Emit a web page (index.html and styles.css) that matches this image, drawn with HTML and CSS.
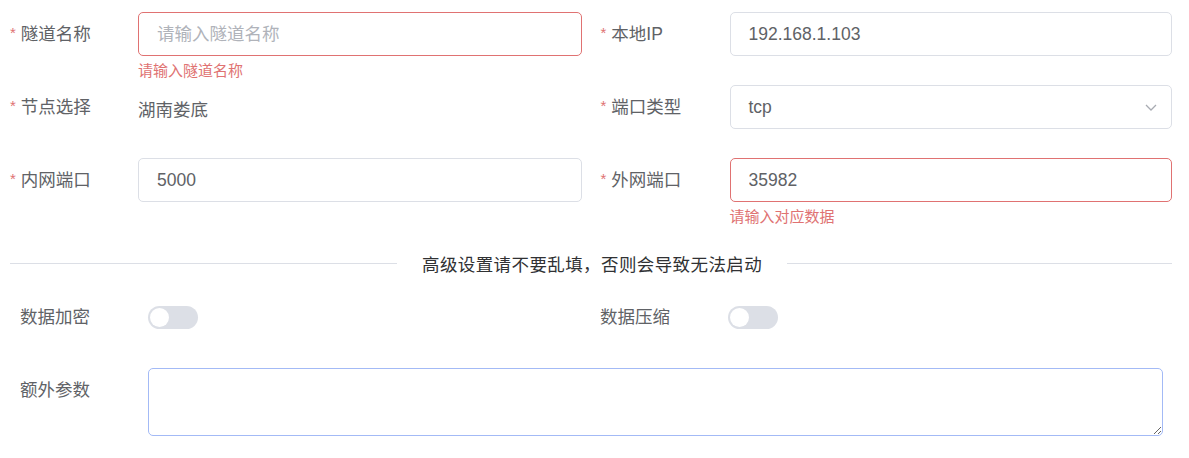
FILE: index.html
```html
<!DOCTYPE html>
<html lang="zh-CN">
<head>
    <meta charset="UTF-8">
    <title>隧道设置</title>
    <link rel="stylesheet" href="styles.css">
</head>
<body>
    <form class="tunnel-form">
        <div class="grid-top">
            <div class="item">
                <label class="label required">隧道名称</label>
                <div class="control">
                    <input class="input is-error" type="text" placeholder="请输入隧道名称">
                    <div class="error">请输入隧道名称</div>
                </div>
            </div>
            <div class="item">
                <label class="label required">本地IP</label>
                <div class="control">
                    <input class="input" type="text" value="192.168.1.103">
                </div>
            </div>

            <div class="item">
                <label class="label required">节点选择</label>
                <div class="control">
                    <span class="plain">湖南娄底</span>
                </div>
            </div>
            <div class="item">
                <label class="label required">端口类型</label>
                <div class="control">
                    <div class="select">
                        <span>tcp</span>
                        <svg width="12" height="7" viewBox="0 0 12 7"><polyline points="1,1 6,6 11,1" fill="none" stroke="#a8abb2" stroke-width="1.3"/></svg>
                    </div>
                </div>
            </div>

            <div class="item">
                <label class="label required">内网端口</label>
                <div class="control">
                    <input class="input" type="text" value="5000">
                </div>
            </div>
            <div class="item">
                <label class="label required">外网端口</label>
                <div class="control">
                    <input class="input is-error" type="text" value="35982">
                    <div class="error">请输入对应数据</div>
                </div>
            </div>
        </div>

        <div class="divider">
            <span>高级设置请不要乱填，否则会导致无法启动</span>
        </div>

        <div class="grid-bottom">
            <div class="item">
                <label class="label">数据加密</label>
                <div class="control">
                    <span class="switch"><span class="knob"></span></span>
                </div>
            </div>
            <div class="item">
                <label class="label">数据压缩</label>
                <div class="control">
                    <span class="switch"><span class="knob"></span></span>
                </div>
            </div>
            <div class="item wide">
                <label class="label">额外参数</label>
                <div class="control">
                    <textarea class="textarea"></textarea>
                </div>
            </div>
        </div>
    </form>
</body>
</html>
```

FILE: styles.css
```css
body {
    margin: 0;
    background: #fff;
    font-family: 'Liberation Sans', 'Noto Sans CJK SC', sans-serif;
    font-size: 17.5px;
    color: #606266;
}

.tunnel-form {
    padding-top: 12px;
}

.grid-top {
    display: grid;
    grid-template-columns: 1fr 1fr;
    column-gap: 19px;
    padding: 0 17px 0 10px;
}

.grid-bottom {
    display: grid;
    grid-template-columns: 561px 1fr;
    column-gap: 19px;
    padding: 0 26px 0 20px;
}

.item {
    display: flex;
    margin-bottom: 29px;
}

.item.wide {
    grid-column: 1 / 3;
}

.label {
    box-sizing: border-box;
    width: 128px;
    height: 44px;
    padding-bottom: 4px;
    flex-shrink: 0;
    display: flex;
    align-items: center;
    color: #606266;
}

.grid-top .item:nth-child(2n) .label {
    width: 129px;
}

.label.required::before {
    content: "*";
    color: #e07272;
    margin-right: 5px;
    font-size: 15px;
    line-height: 1;
}

.control {
    flex: 1;
    position: relative;
    min-height: 44px;
    display: flex;
    align-items: center;
}

.input,
.select {
    box-sizing: border-box;
    width: 100%;
    height: 44px;
    border: 1px solid #dcdfe6;
    border-radius: 5px;
    padding: 0 18px;
    font-family: inherit;
    font-size: 17.5px;
    color: #606266;
    background: #fff;
    outline: none;
}

.input::placeholder {
    color: #b0b3ba;
}

.input.is-error {
    border-color: #e07272;
}

.select {
    display: flex;
    align-items: center;
    justify-content: space-between;
    padding-right: 14px;
}

.error {
    position: absolute;
    top: 100%;
    left: 0;
    margin-top: 7px;
    font-size: 15px;
    line-height: 1;
    color: #e07272;
}

.plain {
    line-height: 38px;
    padding-top: 6px;
}

/* divider */
.divider {
    display: flex;
    align-items: center;
    margin: 32px 17px 32px 10px;
    height: 0;
    color: #303133;
}

.divider::before,
.divider::after {
    content: "";
    flex: 1;
    border-top: 1px solid #dcdfe6;
}

.divider::before {
    flex: 0 0 387px;
}

.divider span {
    padding: 0 25px;
    white-space: nowrap;
    letter-spacing: 0.4px;
}

/* switch */
.switch {
    position: relative;
    display: inline-block;
    width: 50px;
    height: 23px;
    border-radius: 12px;
    background: #dcdfe6;
}

.knob {
    position: absolute;
    top: 2px;
    left: 2px;
    width: 19px;
    height: 19px;
    border-radius: 50%;
    background: #fff;
}

.textarea {
    box-sizing: border-box;
    display: block;
    width: 100%;
    height: 68px;
    border: 1px solid #a3baf6;
    border-radius: 5px;
    padding: 6px 14px;
    font-family: inherit;
    font-size: 17.5px;
    outline: none;
    align-self: flex-start;
}
```
